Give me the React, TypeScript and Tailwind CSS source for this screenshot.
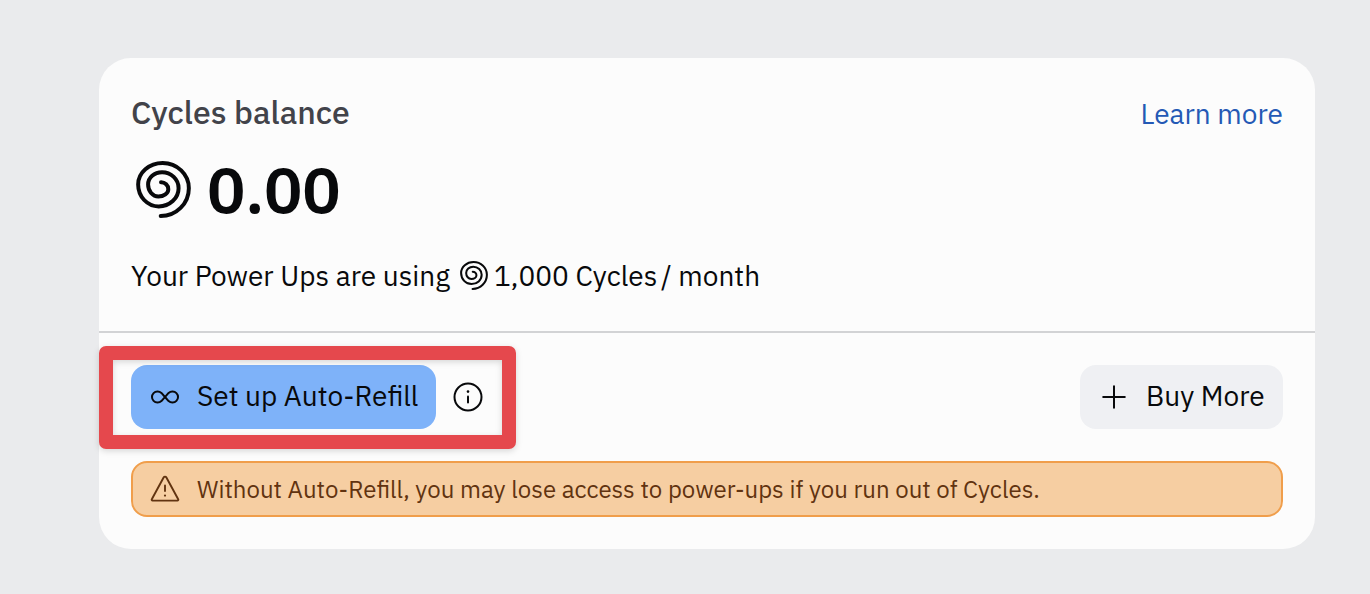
type IconProps = { className?: string; strokeWidth?: number };

function Spiral({ className, strokeWidth = 12 }: IconProps) {
  return (
    <svg viewBox="32 34 165 172" className={className} fill="none" stroke="currentColor" strokeWidth={strokeWidth} strokeLinecap="round">
      <path d="M107 98A22 21 0 0 1 129 119A30 22 0 0 1 99 141A31 36 0 0 1 68 105A42 37 0 0 1 110 68A50 48 0 0 1 160 116A60 55 0 0 1 100 171A62 66 0 0 1 38 105A74 65 0 0 1 112 40A79 76 0 0 1 191 116A85 84 0 0 1 106 200" />
    </svg>
  );
}

function Infinity() {
  return (
    <svg viewBox="0 0 32 32" className="size-8" fill="none" stroke="currentColor" strokeWidth="2" strokeLinecap="round" strokeLinejoin="round">
      <path d="M16 16l-3.6-4.1a5.6 5.6 0 1 0 0 8.2L19.6 11.9a5.6 5.6 0 1 1 0 8.2Z" />
    </svg>
  );
}

function Info() {
  return (
    <svg viewBox="0 0 32 32" className="size-8" fill="none" stroke="currentColor" strokeWidth="2" strokeLinecap="round">
      <circle cx="16" cy="16" r="13.5" />
      <path d="M16 15.5v6" />
      <circle cx="16" cy="10.6" r="1.3" fill="currentColor" stroke="none" />
    </svg>
  );
}

function Plus() {
  return (
    <svg viewBox="0 0 32 32" className="size-8" fill="none" stroke="currentColor" strokeWidth="2" strokeLinecap="round">
      <path d="M16 5.2v21.6M5.2 16h21.6" />
    </svg>
  );
}

function Warning() {
  return (
    <svg viewBox="0 0 32 32" className="size-8" fill="none" stroke="currentColor" strokeWidth="1.9" strokeLinecap="round" strokeLinejoin="round">
      <path d="M14.6 4.5a1.6 1.6 0 0 1 2.8 0L29.2 26.2a.9 .9 0 0 1-.8 1.4H3.6a.9 .9 0 0 1-.8-1.4Z" />
      <path d="M16 12.4v5.6" />
      <circle cx="16" cy="22.6" r="1.1" fill="currentColor" stroke="none" />
    </svg>
  );
}

export default function App() {
  return (
    <div className="h-[594px] w-[1370px] overflow-hidden bg-[#eaebed] pt-[58px] pl-[99px] font-['IBM_Plex_Sans',Roboto,sans-serif] text-[28px] leading-8 whitespace-nowrap text-[#08090b]">
      <main className="h-[491px] w-[1216px] rounded-[32px] bg-[#fcfcfc]">
        <section className="h-[275px] border-b-2 border-[#d2d3d5] px-8 pt-9">
          <div className="flex h-9 items-center justify-between">
            <h1 className="text-[32px] font-medium text-[#42434a]">Cycles balance</h1>
            <a href="#" className="pt-1 text-[#2459b5]">Learn more</a>
          </div>
          <div className="mt-[26px] flex h-[66px] items-center pl-[5px]">
            <Spiral className="h-[57px] w-[55px]" />
            <span className="ml-4 text-[64px] leading-[66px] font-semibold tracking-[-0.25px]">0.00</span>
          </div>
          <p className="mt-9 flex h-9 items-center">
            <span className="w-[328.5px]">Your Power Ups are using</span>
            <Spiral className="mb-px h-[29px] w-7" />
            <span className="ml-[6.5px] w-[167px]">1,000 Cycles</span>
            <span>/ month</span>
          </p>
        </section>
        <section className="px-8 pt-8">
          <div className="flex h-16 items-center">
            <div className="relative flex items-center">
              <button className="flex h-16 w-[305px] items-center rounded-2xl bg-[#7eb2f9] pl-[18px]">
                <Infinity />
                <span className="ml-4 pb-0.5">Set up Auto-Refill</span>
              </button>
              <button className="ml-4" aria-label="Info"><Info /></button>
              <div className="pointer-events-none absolute -top-[19px] -left-8 h-[103px] w-[417px] rounded-[7px] border-[14px] border-[#e5484d] drop-shadow-[0_2px_3px_rgba(0,0,0,0.15)]" />
            </div>
            <button className="ml-auto flex h-16 w-[203px] items-center rounded-2xl bg-[#eff0f3] pl-[18px]">
              <Plus />
              <span className="ml-4 pb-0.5">Buy More</span>
            </button>
          </div>
          <div className="mt-8 flex h-14 items-center rounded-2xl border-2 border-[#f09e4b] bg-[#f6cea2] pl-4 text-[24px] text-[#613310]">
            <Warning />
            <span className="ml-4">Without Auto-Refill, you may lose access to power-ups if you run out of Cycles.</span>
          </div>
        </section>
      </main>
    </div>
  );
}
